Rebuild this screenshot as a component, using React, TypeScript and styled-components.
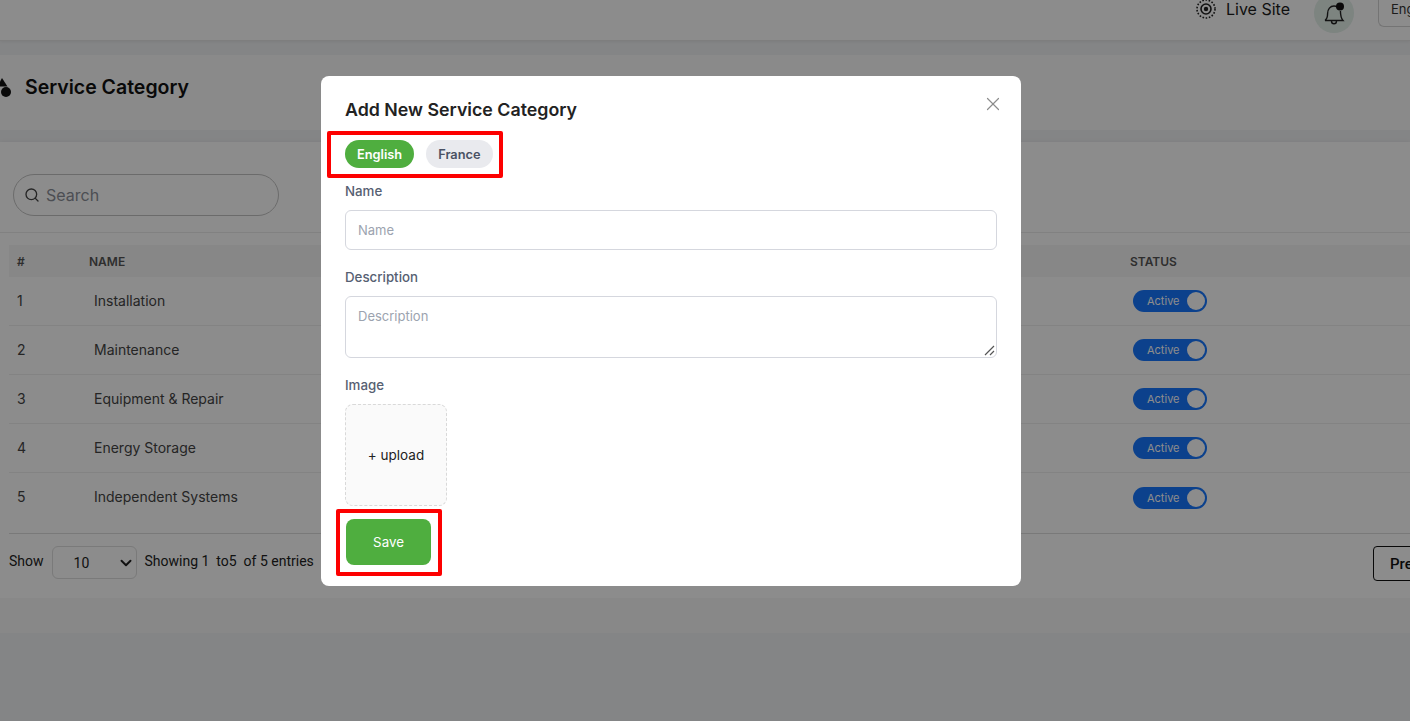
import { createGlobalStyle, styled } from 'styled-components';
import { Search, ChevronDown, X } from 'lucide-react';

const GlobalStyle = createGlobalStyle`
  html, body {
    margin: 0;
    padding: 0;
    height: 100%;
    overflow: hidden;
    background: #f1f2f4;
    font-family: Inter, "Liberation Sans", sans-serif;
  }
  * {
    box-sizing: border-box;
  }
`;

const Screen = styled.div`
  width: 100vw;
  height: 100vh;
  overflow: hidden;
  display: flex;
  flex-direction: column;
`;

const TopBar = styled.header`
  flex: none;
  height: 41px;
  background: #fff;
  border-bottom: 1px solid #e6e6e6;
  box-shadow: 0 1px 3px rgba(0, 0, 0, 0.06);
  overflow: hidden;
  display: flex;
  justify-content: flex-end;
  align-items: flex-start;
  gap: 24px;
`;

const LiveSite = styled.div`
  display: flex;
  align-items: center;
  gap: 10px;
  height: 17px;
  font-size: 16px;
  color: #1c1c1c;
`;

const BellWrap = styled.div`
  flex: none;
  width: 40px;
  height: 40px;
  margin-top: -7px;
  border-radius: 50%;
  background: #e3f0ea;
  display: flex;
  align-items: center;
  justify-content: center;
`;

const LangBox = styled.div`
  flex: none;
  width: 32px;
  height: 36px;
  margin-top: -9px;
  padding: 9px 0 0 12px;
  border: 1px solid #d4d4d4;
  border-right: 0;
  border-radius: 6px 0 0 6px;
  font-size: 13px;
  color: #333;
  white-space: nowrap;
  overflow: hidden;
`;

const TitleCard = styled.section`
  flex: none;
  height: 75px;
  margin-top: 14px;
  background: #fbfbfb;
  display: flex;
  align-items: flex-start;
  gap: 14px;
  padding-top: 20px;
`;

const PageTitle = styled.h1`
  margin: 0;
  font-size: 19.5px;
  line-height: 24px;
  font-weight: 600;
  color: #111;
`;

const TableCard = styled.section`
  flex: none;
  height: 456px;
  margin-top: 12px;
  background: #fff;
  box-shadow: 0 2px 6px rgba(0, 0, 0, 0.12);
  padding-top: 32px;
  display: flex;
  flex-direction: column;
`;

const BottomBand = styled.div`
  flex: none;
  height: 35px;
  background: #f8f8f8;
`;

const SearchBox = styled.div`
  width: 266px;
  height: 42px;
  margin-left: 13px;
  padding-left: 10px;
  border: 1px solid #c4c4c4;
  border-radius: 21px;
  display: flex;
  align-items: center;
  gap: 6px;
  font-size: 16px;
  color: #8b8f98;
`;

const Divider = styled.div`
  height: 1px;
  margin-top: 16px;
  background: #ececec;
`;

const Table = styled.div`
  margin: 12px 0 0 9px;
`;

const columns = '72px 1041px 1fr';

const HeadRow = styled.div`
  height: 32px;
  padding-left: 8px;
  background: #f6f6f6;
  display: grid;
  grid-template-columns: ${columns};
  align-items: center;
  font-size: 12px;
  font-weight: 600;
  color: #555;
`;

const Row = styled.div`
  height: 49px;
  padding-left: 8px;
  border-bottom: 1px solid #efefef;
  display: grid;
  grid-template-columns: ${columns};
  align-items: center;
  font-size: 14px;
  color: #444;

  &:last-child {
    border-bottom: 0;
  }
`;

const NumberCell = styled.div`
  margin-bottom: 2px;
`;

const NameCell = styled.div`
  margin-bottom: 2px;
  padding-left: 5px;
`;

const Toggle = styled.div`
  width: 74px;
  height: 22px;
  margin-left: 3px;
  padding: 0 2px 0 14px;
  border-radius: 11px;
  background: #1677ff;
  display: flex;
  align-items: center;
  justify-content: space-between;
  font-size: 11px;
  color: #fff;
`;

const Knob = styled.span`
  width: 18px;
  height: 18px;
  border-radius: 50%;
  background: #fff;
`;

const TableFooter = styled.div`
  margin: 11px 0 0 9px;
  padding-top: 12px;
  border-top: 1px solid #dcdcdc;
  display: flex;
  align-items: flex-start;
  font-family: Roboto, "Liberation Sans", sans-serif;
  font-size: 14px;
  color: #222;
`;

const FooterInfo = styled.div`
  flex: 1;
  min-width: 0;
  height: 33px;
  display: flex;
  align-items: flex-start;
  gap: 8px;
  line-height: 30px;
  white-space: pre;
`;

const PageSelect = styled.div`
  width: 85px;
  height: 33px;
  padding: 0 1px 0 21px;
  border: 1px solid #dedede;
  border-radius: 6px;
  display: flex;
  align-items: center;
  justify-content: space-between;
`;

const Pager = styled.div`
  flex: 0 0 37px;
  min-width: 0;
`;

const PagerButton = styled.div`
  width: 90px;
  height: 35px;
  padding-left: 16px;
  border: 1px solid #111;
  border-radius: 4px;
  display: flex;
  align-items: center;
  font-size: 15px;
  font-weight: 500;
  color: #111;
`;

const Overlay = styled.div`
  position: fixed;
  inset: 0;
  background: rgba(0, 0, 0, 0.45);
  padding-top: 76px;
`;

const Modal = styled.div`
  position: relative;
  width: 700px;
  height: 510px;
  margin-left: 321px;
  padding: 22px 24px 0;
  background: #fff;
  border-radius: 8px;
`;

const CloseButton = styled.div`
  position: absolute;
  top: 17px;
  right: 17px;
  display: flex;
  color: #8c8c8c;
`;

const ModalTitle = styled.h2`
  margin: 0;
  font-size: 17.8px;
  line-height: 24px;
  font-weight: 600;
  color: #222;
`;

const Annotated = styled.div`
  position: relative;
`;

const RedBox = styled.span<{ $top: number; $right: number; $bottom: number; $left: number }>`
  position: absolute;
  top: ${(p) => p.$top}px;
  right: ${(p) => p.$right}px;
  bottom: ${(p) => p.$bottom}px;
  left: ${(p) => p.$left}px;
  border: 4px solid #fd0000;
  border-radius: 2px;
  pointer-events: none;
`;

const Tabs = styled(Annotated)`
  width: 147px;
  margin-top: 18px;
  display: flex;
  gap: 12px;
`;

const Tab = styled.div<{ $active?: boolean }>`
  height: 28px;
  padding: 0 12px;
  border-radius: 14px;
  background: ${(p) => (p.$active ? '#4fae3f' : '#e9eaee')};
  color: ${(p) => (p.$active ? '#fff' : '#4a5264')};
  font-size: 12.8px;
  font-weight: 600;
  display: flex;
  align-items: center;
`;

const Label = styled.label<{ $top: number }>`
  display: block;
  margin-top: ${(p) => p.$top}px;
  font-size: 13.3px;
  line-height: 18px;
  font-weight: 500;
  color: #566072;
`;

const TextInput = styled.div`
  height: 40px;
  margin-top: 10px;
  padding: 0 12px;
  border: 1px solid #d5d7de;
  border-radius: 6px;
  display: flex;
  align-items: center;
  font-size: 13px;
  color: #9ca3af;
`;

const TextArea = styled(TextInput)`
  position: relative;
  height: 62px;
  padding-top: 11px;
  align-items: flex-start;
`;

const ResizeGrip = styled.svg`
  position: absolute;
  right: 1px;
  bottom: 1px;
`;

const Upload = styled.div`
  width: 102px;
  height: 102px;
  margin-top: 10px;
  border: 1px dashed #d9d9d9;
  border-radius: 8px;
  background: #fafafa;
  display: flex;
  align-items: center;
  justify-content: center;
  font-size: 13.5px;
  color: #222;
`;

const SaveWrap = styled(Annotated)`
  width: 85px;
  margin: 13px 0 0 1px;
`;

const SaveButton = styled.button`
  display: block;
  width: 85px;
  height: 46px;
  border: 0;
  border-radius: 8px;
  background: #4fae3f;
  color: #fff;
  font-family: Inter, "Liberation Sans", sans-serif;
  font-size: 13.3px;
  font-weight: 400;
`;

const categories = [
  'Installation',
  'Maintenance',
  'Equipment & Repair',
  'Energy Storage',
  'Independent Systems',
];

function App() {
  return (
    <Screen>
      <GlobalStyle />
      <TopBar>
        <LiveSite>
          <svg width="20" height="20" viewBox="0 0 20 20" fill="none" stroke="#222">
            <circle cx="10" cy="10" r="9" strokeWidth="1.6" strokeDasharray="1.6 1.6" />
            <circle cx="10" cy="10" r="5" strokeWidth="1.6" />
            <circle cx="10" cy="10" r="2.2" fill="#222" stroke="none" />
          </svg>
          Live Site
        </LiveSite>
        <BellWrap>
          <svg width="24" height="26" viewBox="0 0 24 26" fill="none" stroke="#222" strokeWidth="1.4">
            <path d="M3 20.5c2-1.6 2.6-3.6 2.6-7 0-4.2 2.6-7.5 6.4-7.5 1.2 0 2.3.3 3.2.9" />
            <path d="M18.4 11c.1 3.6.6 7.4 2.6 9.5H3" />
            <path d="M9.5 21c0 1.7 1.1 2.8 2.5 2.8s2.500-1.1 2.500-2.8" />
            <circle cx="18" cy="6.5" r="4" fill="#111" stroke="none" />
          </svg>
        </BellWrap>
        <LangBox>English</LangBox>
      </TopBar>

      <TitleCard>
        <svg width="11" height="26" viewBox="0 0 11 26" fill="#111">
          <path d="M-3 11.5 2 3l5.5 8.5z" />
          <circle cx="6" cy="17" r="5" />
        </svg>
        <PageTitle>Service Category</PageTitle>
      </TitleCard>

      <TableCard>
        <SearchBox>
          <Search size={16} color="#444" />
          Search
        </SearchBox>
        <Divider />
        <Table>
          <HeadRow>
            <div>#</div>
            <div>NAME</div>
            <div>STATUS</div>
          </HeadRow>
          {categories.map((name, i) => (
            <Row key={name}>
              <NumberCell>{i + 1}</NumberCell>
              <NameCell>{name}</NameCell>
              <Toggle>
                Active
                <Knob />
              </Toggle>
            </Row>
          ))}
        </Table>
        <TableFooter>
          <FooterInfo>
            Show
            <PageSelect>
              10
              <ChevronDown size={18} strokeWidth={2.6} color="#222" />
            </PageSelect>
            Showing 1  to5  of 5 entries
          </FooterInfo>
          <Pager>
            <PagerButton>Previous</PagerButton>
          </Pager>
        </TableFooter>
      </TableCard>
      <BottomBand />

      <Overlay>
        <Modal>
          <CloseButton>
            <X size={22} strokeWidth={1.3} />
          </CloseButton>
          <ModalTitle>Add New Service Category</ModalTitle>
          <Tabs>
            <Tab $active>English</Tab>
            <Tab>France</Tab>
            <RedBox $top={-9} $right={-11} $bottom={-10} $left={-18} />
          </Tabs>
          <Label $top={14}>Name</Label>
          <TextInput>Name</TextInput>
          <Label $top={18}>Description</Label>
          <TextArea>
            Description
            <ResizeGrip width="12" height="12" viewBox="0 0 12 12" stroke="#555" strokeWidth="1.2">
              <path d="M2 11 11 2M7 11l4-4" />
            </ResizeGrip>
          </TextArea>
          <Label $top={18}>Image</Label>
          <Upload>+ upload</Upload>
          <SaveWrap>
            <SaveButton>Save</SaveButton>
            <RedBox $top={-10} $right={-11} $bottom={-11} $left={-10} />
          </SaveWrap>
        </Modal>
      </Overlay>
    </Screen>
  );
}

export default App;
